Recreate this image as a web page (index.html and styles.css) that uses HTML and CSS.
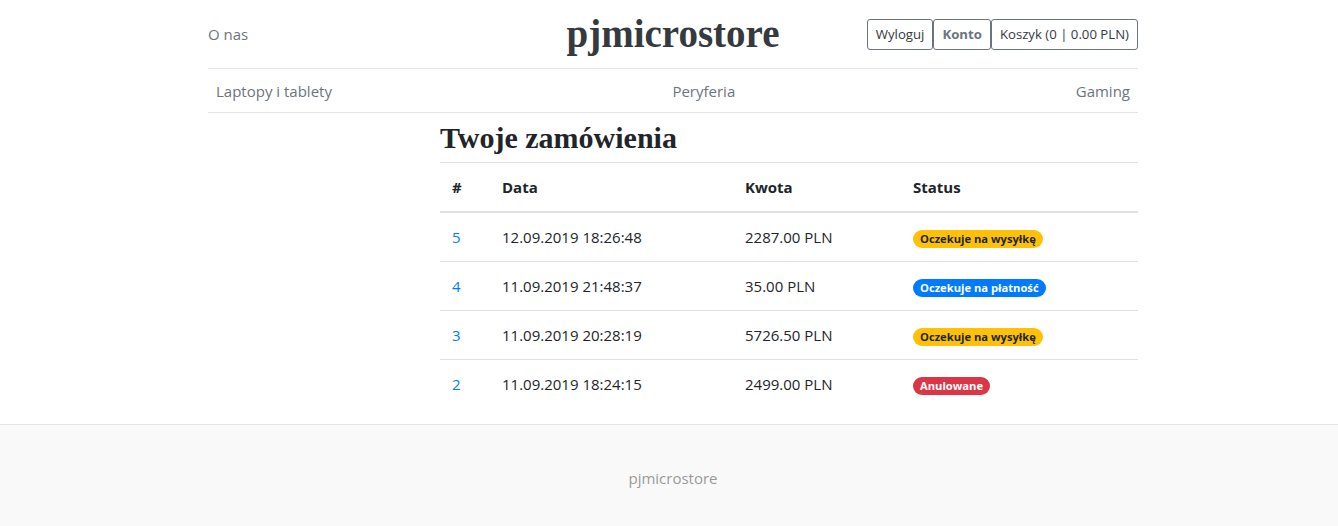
FILE: index.html
```html
<!DOCTYPE html>
<html lang="pl">
<head>
<meta charset="utf-8">
<title>pjmicrostore</title>
<link rel="stylesheet" href="styles.css">
</head>
<body>
<div class="container">
  <header class="blog-header">
    <div class="header-left"><a class="muted" href="#">O nas</a></div>
    <div class="header-center"><a class="blog-header-logo" href="#">pjmicrostore</a></div>
    <div class="header-right">
      <a class="btn" href="#">Wyloguj</a>
      <a class="btn btn-bold" href="#">Konto</a>
      <a class="btn" href="#">Koszyk (0 | 0.00 PLN)</a>
    </div>
  </header>
  <nav class="nav-scroller">
    <a class="nav-link" href="#">Laptopy i tablety</a>
    <a class="nav-link" href="#">Peryferia</a>
    <a class="nav-link" href="#">Gaming</a>
  </nav>
  <main class="main">
    <div class="content">
      <h3 class="page-title">Twoje zamówienia</h3>
      <table class="table">
        <thead>
          <tr><th class="c-id">#</th><th class="c-date">Data</th><th class="c-amt">Kwota</th><th class="c-status">Status</th></tr>
        </thead>
        <tbody>
          <tr><td><a class="link" href="#">5</a></td><td>12.09.2019 18:26:48</td><td>2287.00 PLN</td><td><span class="badge badge-warning">Oczekuje na wysyłkę</span></td></tr>
          <tr><td><a class="link" href="#">4</a></td><td>11.09.2019 21:48:37</td><td>35.00 PLN</td><td><span class="badge badge-primary">Oczekuje na płatność</span></td></tr>
          <tr><td><a class="link" href="#">3</a></td><td>11.09.2019 20:28:19</td><td>5726.50 PLN</td><td><span class="badge badge-warning">Oczekuje na wysyłkę</span></td></tr>
          <tr><td><a class="link" href="#">2</a></td><td>11.09.2019 18:24:15</td><td>2499.00 PLN</td><td><span class="badge badge-danger">Anulowane</span></td></tr>
        </tbody>
      </table>
    </div>
  </main>
</div>
<footer class="blog-footer">
  <p>pjmicrostore</p>
</footer>
</body>
</html>
```
FILE: styles.css
```css
* { box-sizing: border-box; }
html, body { margin: 0; padding: 0; }
body {
  font-family: "Open Sans", "Noto Sans", sans-serif;
  font-size: 15px;
  line-height: 1.6;
  color: #212529;
  background: #fff;
}
a { text-decoration: none; }
.container {
  width: 938px;
  margin: 0 auto;
  padding-left: 8px;
}
.blog-header {
  display: flex;
  align-items: center;
  line-height: 1;
  padding: 16px 0;
  border-bottom: 1px solid #e5e5e5;
}
.header-left, .header-right { flex: 0 0 33.333%; }
.header-center { flex: 1; text-align: center; }
.header-right { display: flex; justify-content: flex-end; gap: 0; }
.muted { color: #6c757d; font-size: 15px; }
.blog-header-logo {
  font-family: "Liberation Serif", "DejaVu Serif", serif;
  font-weight: 700;
  font-size: 39px;
  color: #343a40;
  line-height: 36px;
  display: inline-block;
}
.btn {
  display: inline-block;
  font-size: 13.2px;
  line-height: 21px;
  padding: 4px 8px;
  border: 1px solid #6c757d;
  border-radius: 3px;
  color: #343a40;
}
.btn-bold { font-weight: 700; color: #6c757d; }
.nav-scroller {
  display: flex;
  justify-content: space-between;
  height: 44px;
  padding: 2px 0;
  border-bottom: 1px solid #e5e5e5;
  margin-bottom: 8px;
  overflow: hidden;
}
.nav-link {
  color: #6c757d;
  padding: 8px;
  line-height: 24px;
}
.main { display: flex; }
.content { margin-left: 232px; flex: 1; }
.page-title {
  font-family: "Liberation Serif", "DejaVu Serif", serif;
  font-weight: 700;
  font-size: 30px;
  line-height: 34px;
  margin: 0 0 7px 0;
  color: #212529;
}
.table {
  width: 100%;
  border-collapse: collapse;
  margin-bottom: 16px;
}
.table th, .table td {
  text-align: left;
  padding: 12px;
  line-height: 24px;
  border-top: 1px solid #dee2e6;
  vertical-align: middle;
}
.table th { font-weight: 700; }
.table thead th { border-bottom: 2px solid #dee2e6; }
.table tbody tr:first-child td { border-top: none; }
.c-id { width: 50px; }
.c-date { width: 243px; }
.c-amt { width: 168px; }
.link { color: #007bff; }
.badge {
  display: inline-block;
  font-size: 11.2px;
  font-weight: 700;
  line-height: 1;
  padding: 3px 7px;
  border-radius: 10px;
  white-space: nowrap;
  vertical-align: middle;
}
.badge-warning { background: #ffc107; color: #212529; }
.badge-primary { background: #007bff; color: #fff; }
.badge-danger { background: #dc3545; color: #fff; }
.blog-footer {
  background: #f9f9f9;
  border-top: 1px solid #e5e5e5;
  text-align: center;
  color: #999;
  padding: 40px 0 38px 8px;
}
.blog-footer p { margin: 0; line-height: 24px; position: relative; top: 1px; }
```
